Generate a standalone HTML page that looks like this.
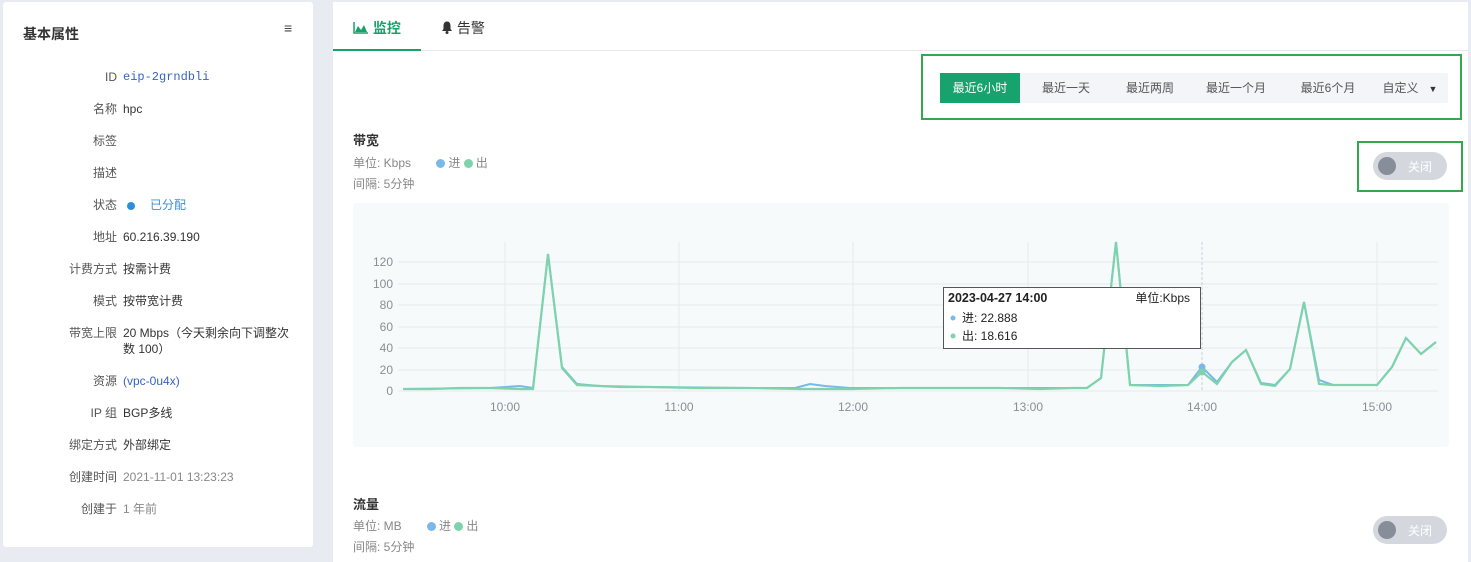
<!DOCTYPE html>
<html><head><meta charset="utf-8"><style>
*{box-sizing:border-box;margin:0;padding:0}
body{width:1471px;height:554px;background:#e8ecf2;font-family:"Liberation Sans","Noto Sans CJK SC",sans-serif;position:relative;overflow:hidden;color:#333}
.abs{position:absolute}
#left{left:3px;top:2px;width:310px;height:545px;background:#fff;border-radius:3px}
.row{position:absolute;left:0;width:310px;font-size:12px;line-height:16px}
.row .k{position:absolute;right:196px;text-align:right;color:#555;white-space:nowrap}
.row .v{position:absolute;left:120px;width:168px;color:#333}
#right{left:333px;top:2px;width:1135px;height:560px;background:#fff}
.seg{position:absolute;top:0;height:30px;line-height:30px;font-size:12px;color:#555;text-align:center}
.sw{position:absolute;width:74px;height:28px;border-radius:14px;background:#d4d8de}
.sw i{position:absolute;left:5px;top:5px;width:18px;height:18px;border-radius:50%;background:#878e99}
.sw span{position:absolute;left:35px;top:6px;font-size:12px;color:#fff}
.small{font-size:12px;color:#888}
.dot{display:inline-block;width:9px;height:9px;border-radius:50%;vertical-align:-1px;margin:0 3px 0 0}
</style></head><body>
<div id="left" class="abs">
  <div class="abs" style="left:20px;top:22px;font-size:14px;font-weight:bold;color:#333">基本属性</div>
  <div class="abs" style="left:281px;top:18px;font-size:14px;color:#444">≡</div>
  <div class="row" style="top:67px"><span class="k">ID</span><span class="v" style="color:#3565c0;font-family:'Liberation Mono',monospace">eip-2grndbli</span></div>
  <div class="row" style="top:99px"><span class="k">名称</span><span class="v">hpc</span></div>
  <div class="row" style="top:131px"><span class="k">标签</span></div>
  <div class="row" style="top:163px"><span class="k">描述</span></div>
  <div class="row" style="top:195px"><span class="k">状态</span><span class="v" style="color:#3d8fd6"><span class="dot" style="background:#2b8fdc;width:8px;height:8px;margin-left:4px"></span><span style="margin-left:12px">已分配</span></span></div>
  <div class="row" style="top:227px"><span class="k">地址</span><span class="v">60.216.39.190</span></div>
  <div class="row" style="top:259px"><span class="k">计费方式</span><span class="v">按需计费</span></div>
  <div class="row" style="top:291px"><span class="k">模式</span><span class="v">按带宽计费</span></div>
  <div class="row" style="top:323px"><span class="k">带宽上限</span><span class="v">20 Mbps（今天剩余向下调整次数 100）</span></div>
  <div class="row" style="top:371px"><span class="k">资源</span><span class="v" style="color:#3565c0">(vpc-0u4x)</span></div>
  <div class="row" style="top:403px"><span class="k">IP 组</span><span class="v">BGP多线</span></div>
  <div class="row" style="top:435px"><span class="k">绑定方式</span><span class="v">外部绑定</span></div>
  <div class="row" style="top:467px"><span class="k">创建时间</span><span class="v" style="color:#888">2021-11-01 13:23:23</span></div>
  <div class="row" style="top:499px"><span class="k">创建于</span><span class="v" style="color:#888">1 年前</span></div>
</div>
<div id="right" class="abs">
  <div class="abs" style="left:0;top:48px;width:1135px;height:1px;background:#e6e8eb"></div>
  <div class="abs" style="left:0;top:47px;width:88px;height:2px;background:#19a06b"></div>
  <div class="abs" style="left:20px;top:16px;font-size:14px;color:#19a06b;font-weight:bold">
    <svg width="16" height="12" viewBox="0 0 16 12" style="vertical-align:-1px"><path d="M1 0V11H15" fill="none" stroke="#19a06b" stroke-width="1.5"/><path d="M2 10L5 4 8 8 11 3 14 10Z" fill="#19a06b"/></svg> 监控</div>
  <div class="abs" style="left:108px;top:16px;font-size:14px;color:#333">
    <svg width="12" height="13" viewBox="0 0 12 13" style="vertical-align:-1px"><path d="M6 0.5C3.5 0.5 2.5 2.5 2.5 5V8L1 10H11L9.5 8V5C9.5 2.5 8.5 0.5 6 0.5Z" fill="#333"/><circle cx="6" cy="11.5" r="1.5" fill="#333"/></svg> 告警</div>

  <div class="abs" style="left:588px;top:52px;width:541px;height:66px;border:2px solid #33a94d"></div>
  <div class="abs" style="left:607px;top:71px;width:508px;height:30px;background:#f3f5f8;border-radius:2px">
    <div class="seg" style="left:0;width:80px;background:#17a36d;color:#fff">最近6小时</div>
    <div class="seg" style="left:80px;width:92px">最近一天</div>
    <div class="seg" style="left:172px;width:76px">最近两周</div>
    <div class="seg" style="left:248px;width:96px">最近一个月</div>
    <div class="seg" style="left:344px;width:88px">最近6个月</div>
    <div class="seg" style="left:432px;width:76px">自定义 &nbsp; <span style="font-size:9px;color:#333">▼</span></div>
  </div>

  <div class="abs" style="left:20px;top:128px;font-size:13px;font-weight:bold;color:#333">带宽</div>
  <div class="abs small" style="left:20px;top:152px">单位: Kbps <span style="margin-left:22px"><span class="dot" style="background:#7ab8e8"></span>进 <span class="dot" style="background:#7ed3ad"></span>出</span></div>
  <div class="abs small" style="left:20px;top:173px">间隔: 5分钟</div>
  <div class="abs" style="left:1024px;top:139px;width:106px;height:51px;border:2px solid #33a94d"></div>
  <div class="sw" style="left:1040px;top:150px"><i></i><span>关闭</span></div>

  <div class="abs" style="left:20px;top:201px;width:1096px;height:244px;background:#f7fafb;border-radius:4px"></div>

  <div class="abs" style="left:20px;top:492px;font-size:13px;font-weight:bold;color:#333">流量</div>
  <div class="abs small" style="left:20px;top:515px">单位: MB <span style="margin-left:22px"><span class="dot" style="background:#7ab8e8"></span>进 <span class="dot" style="background:#7ed3ad"></span>出</span></div>
  <div class="abs small" style="left:20px;top:536px">间隔: 5分钟</div>
  <div class="sw" style="left:1040px;top:514px"><i></i><span>关闭</span></div>
</div>

<svg class="abs" style="left:0;top:0" width="1471" height="554">
  <g stroke="#e6eaee" stroke-width="1">
    <line x1="398" y1="262" x2="1438" y2="262"/><line x1="398" y1="284" x2="1438" y2="284"/>
    <line x1="398" y1="305" x2="1438" y2="305"/><line x1="398" y1="327" x2="1438" y2="327"/>
    <line x1="398" y1="348" x2="1438" y2="348"/><line x1="398" y1="370" x2="1438" y2="370"/>
    <line x1="398" y1="391" x2="1438" y2="391"/>
    <line x1="505" y1="242" x2="505" y2="391"/><line x1="679" y1="242" x2="679" y2="391"/>
    <line x1="853" y1="242" x2="853" y2="391"/><line x1="1028" y1="242" x2="1028" y2="391"/>
    <line x1="1377" y1="242" x2="1377" y2="391"/>
  </g>
  <line x1="1202" y1="242" x2="1202" y2="391" stroke="#ccd" stroke-dasharray="3,2"/>
  <g font-family="Liberation Sans,sans-serif" font-size="12" fill="#8a8f96" text-anchor="end">
    <text x="393" y="266">120</text><text x="393" y="288">100</text><text x="393" y="309">80</text>
    <text x="393" y="331">60</text><text x="393" y="352">40</text><text x="393" y="374">20</text><text x="393" y="395">0</text>
  </g>
  <g font-family="Liberation Sans,sans-serif" font-size="12" fill="#8a8f96" text-anchor="middle">
    <text x="505" y="411">10:00</text><text x="679" y="411">11:00</text><text x="853" y="411">12:00</text>
    <text x="1028" y="411">13:00</text><text x="1202" y="411">14:00</text><text x="1377" y="411">15:00</text>
  </g>
  <polyline fill="none" stroke="#7ab8e8" stroke-width="2" points="403,389 490,388 520,386 533,388 548,254 562,367 577,384 600,386 650,387 750,388 795,388 810,384 825,386 850,388 1000,388 1073,388 1087,388 1101,378 1116,242 1130,385 1188,385 1202,367 1217,382 1232,362 1246,350 1261,383 1275,385 1290,369 1304,302 1319,380 1333,385 1377,385 1392,367 1406,338 1421,354 1436,342"/>
  <polyline fill="none" stroke="#7ed3ad" stroke-width="2.2" points="403,389 430,389 460,388 490,388 520,389 533,389 548,254 562,368 577,385 600,386 620,387 650,387 700,388 750,388 800,389 850,389 900,388 950,388 1000,388 1040,389 1073,388 1087,388 1101,378 1116,242 1130,385 1160,386 1188,385 1202,372 1217,384 1232,362 1246,350 1261,384 1275,386 1290,369 1304,302 1319,384 1333,385 1363,385 1377,385 1392,367 1406,338 1421,354 1436,342"/>
  <circle cx="1202" cy="367" r="3.5" fill="#7ab8e8"/><circle cx="1202" cy="372" r="3.5" fill="#7ed3ad"/>
  <rect x="943.5" y="287.5" width="257" height="61" fill="#fff" stroke="#555"/>
  <g font-family="Liberation Sans,'Noto Sans CJK SC',sans-serif" font-size="12" fill="#222">
    <text x="948" y="302" font-weight="bold" font-size="12.5">2023-04-27 14:00</text>
    <text x="1190" y="302" text-anchor="end">单位:Kbps</text>
    <circle cx="953" cy="318" r="2.5" fill="#7ab8e8"/><text x="962" y="322">进: 22.888</text>
    <circle cx="953" cy="336" r="2.5" fill="#7ed3ad"/><text x="962" y="340">出: 18.616</text>
  </g>
</svg>
</body></html>
